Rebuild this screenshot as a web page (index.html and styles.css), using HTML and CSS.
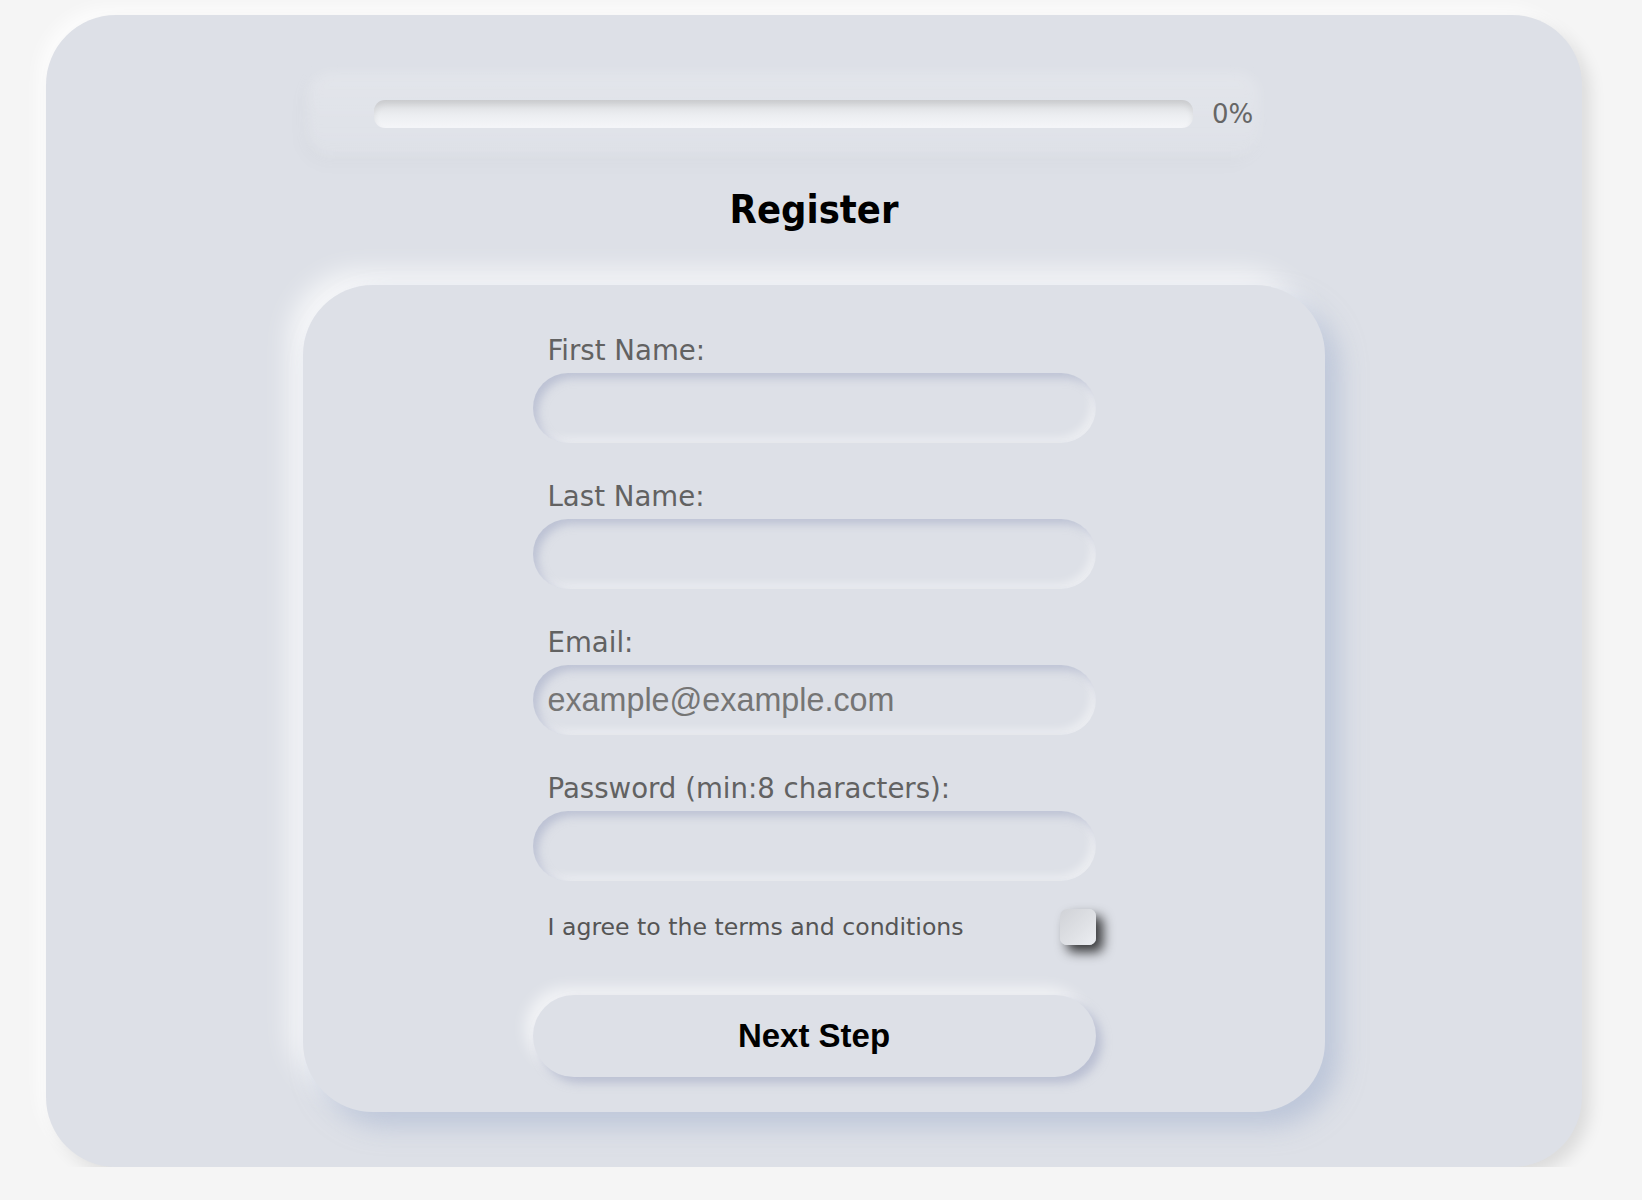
FILE: index.html
```html
<!DOCTYPE html>
<html lang="en">
<head>
<meta charset="utf-8">
<title>Register</title>
<link rel="stylesheet" href="styles.css">
</head>
<body>
<div class="page">
  <div class="card">
    <div class="progress-panel">
      <div class="progress-inner">
        <div class="progress-bar"><div class="progress-fill" style="width:0%"></div></div>
        <span class="progress-text">0%</span>
      </div>
    </div>
    <h1 class="title">Register</h1>
    <div class="form-card">
      <form class="form">
        <div class="field">
          <label class="label" for="first">First Name:</label>
          <input class="input" id="first" type="text">
        </div>
        <div class="field">
          <label class="label" for="last">Last Name:</label>
          <input class="input" id="last" type="text">
        </div>
        <div class="field">
          <label class="label" for="email">Email:</label>
          <input class="input" id="email" type="email" placeholder="example@example.com">
        </div>
        <div class="field field-last">
          <label class="label" for="pw">Password (min:8 characters):</label>
          <input class="input" id="pw" type="password">
        </div>
        <div class="terms">
          <span class="terms-text">I agree to the terms and conditions</span>
          <input class="checkbox" type="checkbox">
        </div>
        <button class="button" type="button">Next Step</button>
      </form>
    </div>
  </div>
</div>
</body>
</html>
```

FILE: styles.css
```css
html, body {
  margin: 0;
  padding: 0;
  background: #f5f5f5;
}

.page {
  padding: 15px 0 0 46px;
}

.card {
  width: 1536px;
  height: 1152px;
  box-sizing: border-box;
  padding-top: 53px;
  background: #dde0e7;
  border-radius: 70px;
  box-shadow: 8px 8px 16px rgba(0, 0, 0, 0.1), -8px -8px 16px rgba(255, 255, 255, 0.7);
  font-family: "DejaVu Sans", Verdana, sans-serif;
}

.progress-panel {
  position: relative;
  margin-left: 258px;
  width: 960px;
  height: 92px;
}

.progress-panel::before {
  content: "";
  position: absolute;
  inset: 4px;
  border-radius: 24px;
  background: linear-gradient(180deg, rgba(255, 255, 255, 0.18), rgba(255, 255, 255, 0.06));
  box-shadow: -6px 8px 14px rgba(0, 0, 0, 0.025);
  filter: blur(6px);
}

.progress-inner {
  position: relative;
  height: 100%;
  display: flex;
  align-items: center;
  padding-left: 70px;
  gap: 19px;
}

.progress-bar {
  flex: 0 0 819px;
  width: 819px;
  height: 28px;
  border-radius: 11px;
  background: linear-gradient(180deg, #d9dadd 0%, #eceef1 55%, #f5f6f9 100%);
  box-shadow: inset 0 4px 6px rgba(0, 0, 0, 0.08);
  overflow: hidden;
}

.progress-fill {
  height: 100%;
  background: #8fa0c4;
}

.progress-text {
  flex: 0 0 auto;
  font-size: 26px;
  color: #666;
}

.title {
  margin: 26px 0 0;
  text-align: center;
  font-family: "DejaVu Sans Condensed", "DejaVu Sans", sans-serif;
  font-weight: bold;
  font-size: 39.5px;
  line-height: 46px;
  color: #000;
}

.form-card {
  width: 1022px;
  margin: 53px auto 0;
  box-sizing: border-box;
  padding: 50px 0 35px;
  border-radius: 70px;
  background: #dde0e7;
  box-shadow: 14px 14px 26px rgba(163, 177, 206, 0.55), -14px -14px 26px rgba(255, 255, 255, 0.75);
}

.form {
  width: 563px;
  margin: 0 auto;
}

.field {
  margin-bottom: 38px;
}

.field-last {
  margin-bottom: 28px;
}

.label {
  display: block;
  padding-left: 15px;
  margin-bottom: 7px;
  font-size: 27.6px;
  line-height: 31px;
  color: #626262;
}

.input {
  display: block;
  width: 100%;
  height: 70px;
  box-sizing: border-box;
  padding: 0 15px;
  border: none;
  outline: none;
  border-radius: 35px;
  background: #dde0e7;
  box-shadow: inset 5px 5px 9px rgba(163, 170, 196, 0.55), inset -5px -5px 9px rgba(255, 255, 255, 0.45);
  font-family: "Liberation Sans", Arial, sans-serif;
  font-size: 32.3px;
  color: #333;
}

.input::placeholder {
  color: #757575;
}

.terms {
  display: flex;
  align-items: center;
  justify-content: space-between;
  height: 36px;
  padding-left: 15px;
}

.terms-text {
  font-size: 23.6px;
  color: #555;
}

.checkbox {
  appearance: none;
  -webkit-appearance: none;
  margin: 0;
  width: 36px;
  height: 36px;
  border-radius: 7px;
  background: linear-gradient(135deg, #d0d2d7 0%, #e0e2e6 60%, #eceef2 100%);
  box-shadow: 7px 7px 12px rgba(0, 0, 0, 0.75);
}

.button {
  display: block;
  width: 100%;
  height: 82px;
  margin-top: 50px;
  border: none;
  border-radius: 41px;
  background: #dde0e7;
  box-shadow: 6px 6px 10px rgba(163, 170, 196, 0.6), -8px -8px 14px rgba(255, 255, 255, 0.6);
  font-family: "Liberation Sans", Arial, sans-serif;
  font-weight: bold;
  font-size: 33px;
  color: #000;
  cursor: pointer;
}
```
